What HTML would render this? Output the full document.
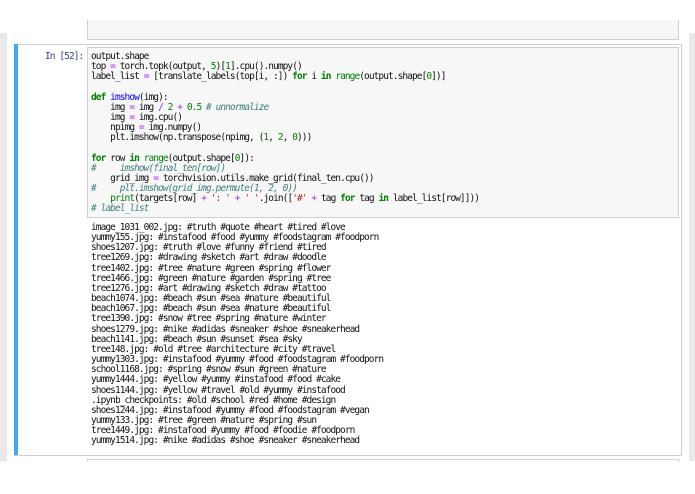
<!DOCTYPE html>
<html><head><style>
body{margin:0;width:695px;height:494px;background:#fff;position:relative;overflow:hidden;font-family:"DejaVu Sans Mono","Liberation Mono",monospace;}
.gl{position:absolute;left:0;top:33px;width:7px;height:428px;background:#e9e9e9;}
.gr{position:absolute;left:689px;top:33px;width:6px;height:428px;background:#e9e9e9;}
.prev{position:absolute;left:87px;top:20px;width:590px;height:19px;background:#f7f7f7;border:1px solid #d0d0d0;border-top:none;}
.cell{position:absolute;left:14px;top:44px;width:667px;height:410px;border:1px solid #cfcfcf;border-left:none;}
.bar{position:absolute;left:14px;top:44px;width:4px;height:411px;background:#42a5f5;}
.prompt{position:absolute;left:45px;top:52px;color:#303f9f;font-size:9.5px;letter-spacing:-0.93px;line-height:10.15px;}
.inp{position:absolute;left:87px;top:47px;width:590px;height:169px;background:#f7f7f7;border:1px solid #cfcfcf;}
pre{margin:0;font-family:inherit;font-size:9.5px;letter-spacing:-0.93px;line-height:10.15px;color:#111;white-space:pre;}
.code{position:absolute;left:91px;top:52px;}
.out{position:absolute;left:91px;top:223px;}
.k{color:#008000;font-weight:bold}.n{color:#008000}.f{color:#0000ff}.o{color:#aa22ff}.m{color:#008000}.c{color:#408080;font-style:italic}.s{color:#ba2121}
.next{position:absolute;left:87px;top:459px;width:591px;height:2px;border:1px solid #d8d8d8;border-bottom:none;background:#fafafa;}
</style></head><body>
<div class="gl"></div><div class="gr"></div>
<div class="prev"></div>
<div class="cell"></div><div class="bar"></div>
<div class="prompt">In [52]:</div>
<div class="inp"></div>
<pre class="code">output.shape
top <span class="o">=</span> torch.topk(output, <span class="m">5</span>)[<span class="m">1</span>].cpu().numpy()
label_list <span class="o">=</span> [translate_labels(top[i, :]) <span class="k">for</span> i <span class="k">in</span> <span class="n">range</span>(output.shape[<span class="m">0</span>])]

<span class="k">def</span> <span class="f">imshow</span>(img):
    img <span class="o">=</span> img <span class="o">/</span> <span class="m">2</span> <span class="o">+</span> <span class="m">0.5</span> <span class="c"># unnormalize</span>
    img <span class="o">=</span> img.cpu()
    npimg <span class="o">=</span> img.numpy()
    plt.imshow(np.transpose(npimg, (<span class="m">1</span>, <span class="m">2</span>, <span class="m">0</span>)))

<span class="k">for</span> row <span class="k">in</span> <span class="n">range</span>(output.shape[<span class="m">0</span>]):
<span class="c">#     imshow(final_ten[row])</span>
    grid_img <span class="o">=</span> torchvision.utils.make_grid(final_ten.cpu())
<span class="c">#     plt.imshow(grid_img.permute(1, 2, 0))</span>
    <span class="n">print</span>(targets[row] <span class="o">+</span> <span class="s">': '</span> <span class="o">+</span> <span class="s">' '</span>.join([<span class="s">'#'</span> <span class="o">+</span> tag <span class="k">for</span> tag <span class="k">in</span> label_list[row]]))
<span class="c"># label_list</span></pre>
<pre class="out">image_1031_002.jpg: #truth #quote #heart #tired #love
yummy155.jpg: #instafood #food #yummy #foodstagram #foodporn
shoes1207.jpg: #truth #love #funny #friend #tired
tree1269.jpg: #drawing #sketch #art #draw #doodle
tree1402.jpg: #tree #nature #green #spring #flower
tree1466.jpg: #green #nature #garden #spring #tree
tree1276.jpg: #art #drawing #sketch #draw #tattoo
beach1074.jpg: #beach #sun #sea #nature #beautiful
beach1067.jpg: #beach #sun #sea #nature #beautiful
tree1390.jpg: #snow #tree #spring #nature #winter
shoes1279.jpg: #nike #adidas #sneaker #shoe #sneakerhead
beach1141.jpg: #beach #sun #sunset #sea #sky
tree148.jpg: #old #tree #architecture #city #travel
yummy1303.jpg: #instafood #yummy #food #foodstagram #foodporn
school1168.jpg: #spring #snow #sun #green #nature
yummy1444.jpg: #yellow #yummy #instafood #food #cake
shoes1144.jpg: #yellow #travel #old #yummy #instafood
.ipynb_checkpoints: #old #school #red #home #design
shoes1244.jpg: #instafood #yummy #food #foodstagram #vegan
yummy133.jpg: #tree #green #nature #spring #sun
tree1449.jpg: #instafood #yummy #food #foodie #foodporn
yummy1514.jpg: #nike #adidas #shoe #sneaker #sneakerhead</pre>
<div class="next"></div>
</body></html>
